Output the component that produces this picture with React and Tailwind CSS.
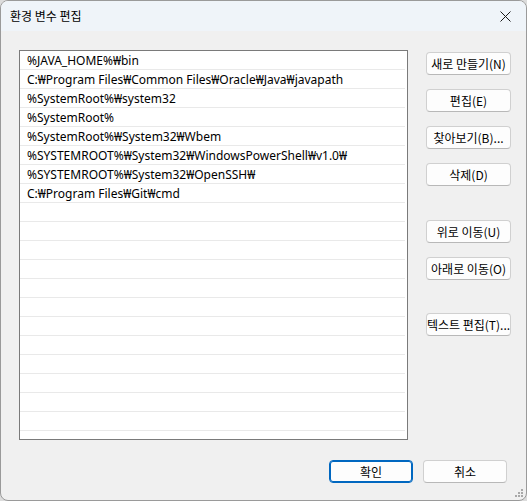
import React from "react";

const paths = [
  "%JAVA_HOME%₩bin",
  "C:₩Program Files₩Common Files₩Oracle₩Java₩javapath",
  "%SystemRoot%₩system32",
  "%SystemRoot%",
  "%SystemRoot%₩System32₩Wbem",
  "%SYSTEMROOT%₩System32₩WindowsPowerShell₩v1.0₩",
  "%SYSTEMROOT%₩System32₩OpenSSH₩",
  "C:₩Program Files₩Git₩cmd",
];

const rows = [...paths, ...Array(13).fill("")];

function Btn({ children, className = "", primary = false, wide = true }) {
  return (
    <div
      className={
        "h-[23px] flex items-center justify-center rounded-[4px] bg-[#fdfdfd] text-[12px] text-black whitespace-nowrap " +
        (wide ? "w-[85px] " : "w-[84px] ") +
        (primary
          ? "border border-[#0067c0] shadow-[inset_0_0_0_1px_#0067c0] "
          : "border border-[#d0d0d0] border-b-[#b8b8b8] ") +
        className
      }
    >
      {children}
    </div>
  );
}

export default function App() {
  return (
    <div
      className="w-[527px] h-[501px] bg-[#dcdcdc] overflow-hidden"
      style={{ fontFamily: '"Noto Sans", "Noto Sans CJK KR", sans-serif' }}
    >
      <div className="relative w-[527px] h-[501px] rounded-[8px] border border-[#9a9a9a] bg-[#f0f0f0] overflow-hidden flex flex-col">
        <div className="h-[30px] bg-[#eff4f9] flex items-center justify-between pl-[9px] pr-[15px] shrink-0">
          <span className="text-[12px] text-black" style={{ fontFamily: '"Noto Sans CJK KR", sans-serif' }}>
            환경 변수 편집
          </span>
          <svg width="11" height="11" viewBox="0 0 11 11">
            <path d="M0.5 0.5 L10.5 10.5 M10.5 0.5 L0.5 10.5" stroke="#1a1a1a" strokeWidth="1" />
          </svg>
        </div>
        <div className="flex pl-[18px] pt-[19px]">
          <div className="w-[389px] h-[390px] border border-[#7a7a7a] bg-white overflow-hidden">
            {rows.map((r, i) => (
              <div
                key={i}
                className="h-[19px] border-b border-[#e9e9e9] mr-[2px] pl-[7px] pt-[1px] flex items-center text-[12px] text-black whitespace-nowrap leading-none"
              >
                {r}
              </div>
            ))}
          </div>
          <div className="ml-[18px] pt-[2px] flex flex-col" style={{ fontFamily: '"Noto Sans CJK KR", "Noto Sans", sans-serif' }}>
            <Btn>새로 만들기(N)</Btn>
            <Btn className="mt-[14px]">편집(E)</Btn>
            <Btn className="mt-[14px]">찾아보기(B)...</Btn>
            <Btn className="mt-[14px]">삭제(D)</Btn>
            <Btn className="mt-[34px]">위로 이동(U)</Btn>
            <Btn className="mt-[14px]">아래로 이동(O)</Btn>
            <Btn className="mt-[33px]">텍스트 편집(T)...</Btn>
          </div>
        </div>
        <div className="flex justify-end gap-[10px] pr-[19px] mt-[20px]" style={{ fontFamily: '"Noto Sans CJK KR", "Noto Sans", sans-serif' }}>
          <Btn primary wide={false}>확인</Btn>
          <Btn wide={false}>취소</Btn>
        </div>
        <svg className="absolute right-[2px] bottom-[2px]" width="11" height="11" viewBox="0 0 11 11">
          <rect x="8" y="2" width="2" height="2" fill="#a8a8a8" />
          <rect x="5" y="5" width="2" height="2" fill="#a8a8a8" />
          <rect x="8" y="5" width="2" height="2" fill="#a8a8a8" />
          <rect x="2" y="8" width="2" height="2" fill="#a8a8a8" />
          <rect x="5" y="8" width="2" height="2" fill="#a8a8a8" />
          <rect x="8" y="8" width="2" height="2" fill="#a8a8a8" />
        </svg>
      </div>
    </div>
  );
}
